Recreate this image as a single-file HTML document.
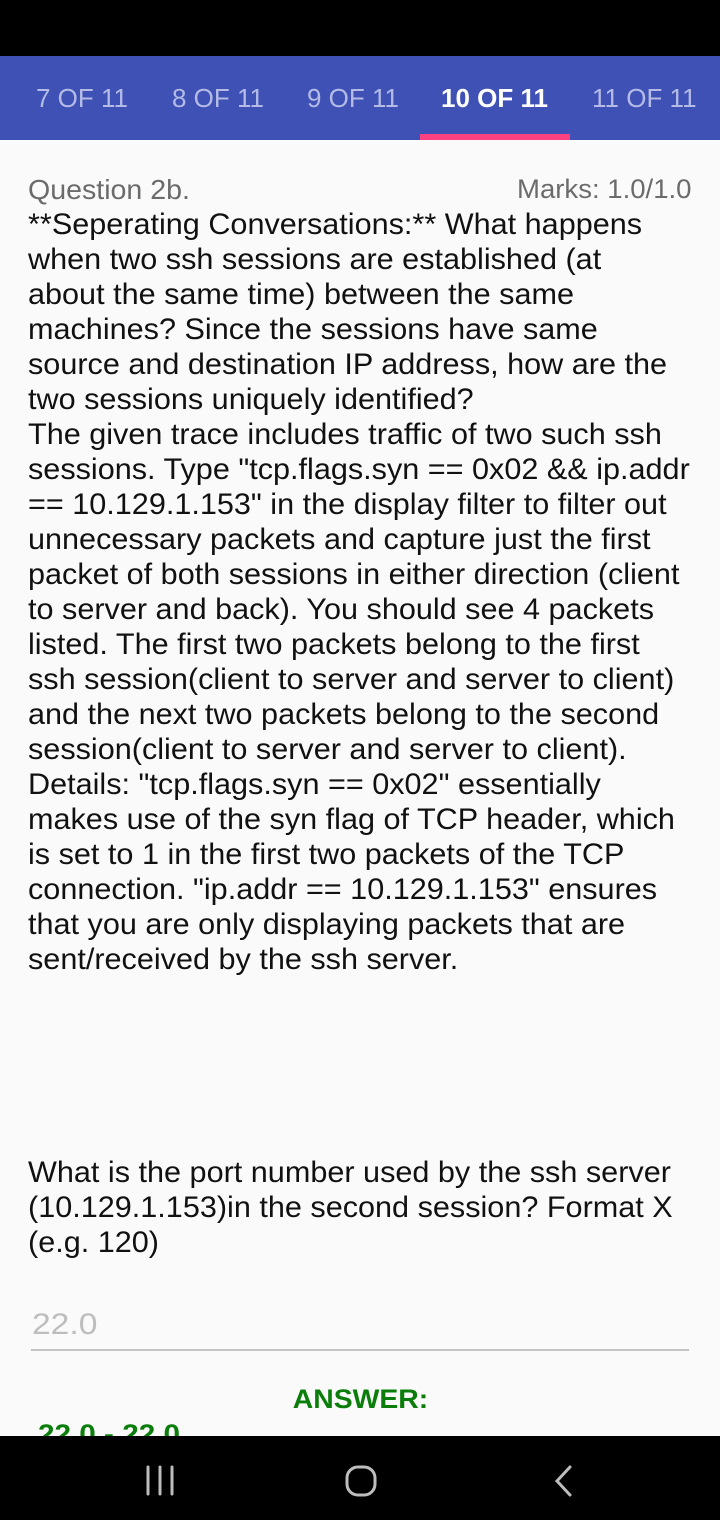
<!DOCTYPE html>
<html><head><meta charset="utf-8"><style>
*{margin:0;padding:0;box-sizing:border-box}
body{width:720px;height:1520px;background:#fafafa;font-family:"Liberation Sans",sans-serif;position:relative;overflow:hidden}
.sb{position:absolute;left:0;top:0;width:720px;height:56px;background:#000}
.tb{position:absolute;left:0;top:56px;width:720px;height:84px;background:#3f51b5}
.tab{position:absolute;top:26px;font-size:26px;color:#b3bbe6;white-space:nowrap;line-height:32px;transform-origin:left;transform:scaleX(1.0)}
.tab.a{color:#fff;font-weight:bold;transform:scaleX(1.0)}
.ind{position:absolute;left:420px;top:134px;width:150px;height:6px;background:#ff4081}
.ln{position:absolute;left:28px;font-size:30px;line-height:35px;color:#111;white-space:nowrap;transform-origin:left;transform:scaleX(1.02)}
.g{color:#6b6b6b}
.nav{position:absolute;left:0;top:1436px;width:720px;height:84px;background:#000}
.c{position:absolute;left:0;top:2px;width:720px;height:1434px}
</style></head><body>
<div class="sb"></div>
<div class="tb">
<div class="tab" style="left:36px">7 OF 11</div>
<div class="tab" style="left:172px">8 OF 11</div>
<div class="tab" style="left:307px">9 OF 11</div>
<div class="tab a" style="left:441px">10 OF 11</div>
<div class="tab" style="left:592px">11 OF 11</div>
</div>
<div class="ind"></div>
<div class="c">
<div class="ln g" style="top:170px;font-size:28px;transform:scaleX(1.02)">Question 2b.</div>
<div class="ln g" style="top:170px;left:517px;font-size:27px;transform:scaleX(1.02)">Marks: 1.0/1.0</div>
<div class="ln" style="top:205px">**Seperating Conversations:** What happens</div>
<div class="ln" style="top:240px">when two ssh sessions are established (at</div>
<div class="ln" style="top:275px">about the same time) between the same</div>
<div class="ln" style="top:310px">machines? Since the sessions have same</div>
<div class="ln" style="top:345px">source and destination IP address, how are the</div>
<div class="ln" style="top:380px">two sessions uniquely identified?</div>
<div class="ln" style="top:415px">The given trace includes traffic of two such ssh</div>
<div class="ln" style="top:450px">sessions. Type "tcp.flags.syn == 0x02 &amp;&amp; ip.addr</div>
<div class="ln" style="top:485px">== 10.129.1.153" in the display filter to filter out</div>
<div class="ln" style="top:520px">unnecessary packets and capture just the first</div>
<div class="ln" style="top:555px">packet of both sessions in either direction (client</div>
<div class="ln" style="top:590px">to server and back). You should see 4 packets</div>
<div class="ln" style="top:625px">listed. The first two packets belong to the first</div>
<div class="ln" style="top:660px">ssh session(client to server and server to client)</div>
<div class="ln" style="top:695px">and the next two packets belong to the second</div>
<div class="ln" style="top:730px">session(client to server and server to client).</div>
<div class="ln" style="top:765px">Details: "tcp.flags.syn == 0x02" essentially</div>
<div class="ln" style="top:800px">makes use of the syn flag of TCP header, which</div>
<div class="ln" style="top:835px">is set to 1 in the first two packets of the TCP</div>
<div class="ln" style="top:870px">connection. "ip.addr == 10.129.1.153" ensures</div>
<div class="ln" style="top:905px">that you are only displaying packets that are</div>
<div class="ln" style="top:940px">sent/received by the ssh server.</div>
<div class="ln" style="top:1153px">What is the port number used by the ssh server</div>
<div class="ln" style="top:1188px">(10.129.1.153)in the second session? Format X</div>
<div class="ln" style="top:1223px">(e.g. 120)</div>
<div class="ln" style="top:1305px;left:32px;color:#bdbdbd;font-size:30px;transform:scaleX(1.12)">22.0</div>
<div style="position:absolute;left:31px;top:1347px;width:658px;height:2px;background:#c4c4c4"></div>
<div style="position:absolute;left:0;width:720px;top:1380px;text-align:center;font-size:27px;font-weight:bold;color:#0a7d0a;line-height:34px"><span style="display:inline-block;transform:scaleX(1.05)">ANSWER:</span></div>
<div class="ln" style="top:1415px;left:38px;font-size:27px;font-weight:bold;color:#0a7d0a;transform:scaleX(1.1)">22.0 - 22.0</div>
</div>
<div class="nav">
<svg width="720" height="84" style="position:absolute;left:0;top:0">
<g stroke="#bdbdbd" stroke-width="3" fill="none" stroke-linecap="round">
<line x1="148" y1="31" x2="148" y2="58"/><line x1="160" y1="31" x2="160" y2="58"/><line x1="172" y1="31" x2="172" y2="58"/>
<rect x="347" y="31" width="28" height="28" rx="11"/>
<polyline points="570,31 557,45 570,59"/>
</g></svg>
</div>
</body></html>
